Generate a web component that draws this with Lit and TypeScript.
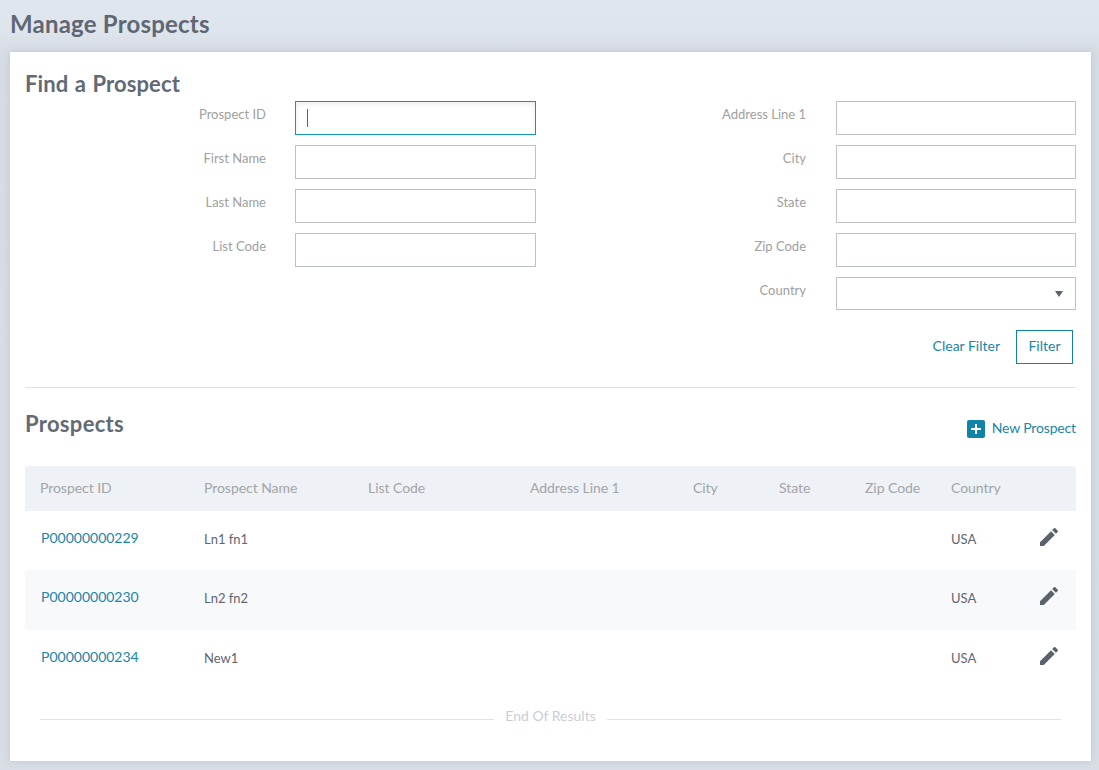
import { LitElement, css, html } from "lit";
import { customElement } from "lit/decorators.js";

const leftFields = ["First Name", "Last Name", "List Code"];
const rightFields = ["Address Line 1", "City", "State", "Zip Code"];
const columns = [
  "Prospect ID",
  "Prospect Name",
  "List Code",
  "Address Line 1",
  "City",
  "State",
  "Zip Code",
  "Country",
];
const prospects = [
  { id: "P00000000229", name: "Ln1 fn1", country: "USA" },
  { id: "P00000000230", name: "Ln2 fn2", country: "USA" },
  { id: "P00000000234", name: "New1", country: "USA" },
];

@customElement("app-root")
export class AppRoot extends LitElement {
  static styles = css`
    :host {
      display: block;
      height: 770px;
      overflow: hidden;
      box-sizing: border-box;
      padding: 0 8px 0 10px;
      background: linear-gradient(#e0e6ee 0, #dfe5ed 30px, #d8dde5 52px, #d9dee6 100%);
      font-family: Lato, "Open Sans", sans-serif;
      font-size: 14px;
      color: #5b626c;
    }

    * {
      box-sizing: border-box;
    }

    .page-title {
      margin: 0;
      height: 52px;
      padding-top: 9px;
      font-size: 24px;
      line-height: 30px;
      font-weight: 700;
      letter-spacing: 0.2px;
      color: #5f6773;
    }

    .card {
      height: 709px;
      padding: 15px 15px 0;
      background: #fff;
      box-shadow: 0 0 8px rgba(120, 130, 145, 0.25);
    }

    h2 {
      margin: 0;
      font-size: 22px;
      line-height: 34px;
      font-weight: 700;
      letter-spacing: 0.1px;
      word-spacing: 1px;
      color: #626a75;
    }

    .find-title {
      height: 34px;
    }

    .list-title {
      letter-spacing: 0.3px;
    }

    .form {
      display: grid;
      grid-template-columns: 511px 1fr;
      align-items: start;
    }

    .field-col {
      display: flex;
      flex-direction: column;
      gap: 10px;
    }

    .field {
      display: grid;
      grid-template-columns: 1fr 29px 241px;
      height: 34px;
    }

    .right .field {
      grid-template-columns: 1fr 30px 240px;
    }

    .field label {
      grid-column: 1;
      text-align: right;
      font-size: 13px;
      line-height: 26px;
      color: #a0a0a0;
    }

    .input,
    input {
      grid-column: 3;
      width: 100%;
      height: 34px;
      border: 1px solid #bfc2c4;
      background: #fff;
      margin: 0;
      padding: 0 11px;
      outline: none;
      border-radius: 0;
    }

    .input.focus {
      display: flex;
      align-items: center;
      border-color: #0f97b9;
      box-shadow: inset 0 2px 5px rgba(0, 0, 0, 0.08);
    }

    .caret {
      width: 1px;
      height: 18px;
      background: #5b626c;
    }

    .field.select {
      height: 33px;
    }

    .input.dropdown {
      height: 33px;
      display: flex;
      align-items: center;
      justify-content: flex-end;
      padding-right: 12px;
    }

    .arrow {
      width: 0;
      height: 0;
      border-left: 4px solid transparent;
      border-right: 4px solid transparent;
      border-top: 6px solid #5b626c;
    }

    .actions {
      display: flex;
      justify-content: flex-end;
      align-items: center;
      gap: 16px;
      margin-top: 20px;
      padding-right: 3px;
    }

    .actions .link {
      margin-top: -4px;
    }

    .link {
      color: #1a85a8;
      text-decoration: none;
    }

    .btn {
      width: 57px;
      height: 34px;
      border: 1px solid #0f83a9;
      background: #fff;
      color: #1a85a8;
      font: inherit;
      padding: 0 0 4px;
    }

    hr {
      margin: 23px 0 0;
      border: 0;
      border-top: 1px solid #e0e0e0;
    }

    .list-head {
      display: flex;
      justify-content: space-between;
      height: 78px;
      padding-top: 19px;
    }

    .new {
      display: flex;
      align-items: center;
      gap: 7px;
      height: 18px;
      margin-top: 13px;
      letter-spacing: -0.15px;
    }

    .new span {
      margin-top: -3px;
    }

    .plus {
      display: block;
      width: 18px;
      height: 18px;
    }

    .row {
      display: grid;
      grid-template-columns: 164px 164px 162px 163px 86px 86px 86px 1fr 36px;
      padding: 0 10px 4px 15px;
      align-items: center;
      height: 59px;
      font-size: 13px;
      color: #5f6670;
    }

    .row:nth-child(odd):not(.head) {
      height: 60px;
      padding-bottom: 5px;
      background: #f8f9fb;
    }

    .row.head {
      height: 45px;
      padding-bottom: 2px;
      background: #eef1f5;
      border-radius: 3px 3px 0 0;
      font-size: 14px;
      letter-spacing: -0.05px;
      color: #a3a5a7;
    }

    .row .link {
      margin: -2px 0 0 1px;
      font-size: 14px;
    }

    .edit {
      display: block;
      width: 24px;
      height: 24px;
      margin: -3px 0 0 7px;
      fill: #5b626c;
    }

    .end {
      display: flex;
      align-items: center;
      gap: 11px;
      margin: 17px 15px 0;
      color: #c9ced6;
      line-height: 20px;
    }

    .end::before,
    .end::after {
      content: "";
      flex: 1;
      height: 1px;
      margin-top: 6px;
      background: #e3e3e3;
    }
  `;

  render() {
    return html`
      <h1 class="page-title">Manage Prospects</h1>
      <main class="card">
        <h2 class="find-title">Find a Prospect</h2>
        <div class="form">
          <div class="field-col">
            <div class="field">
              <label>Prospect ID</label>
              <div class="input focus"><span class="caret"></span></div>
            </div>
            ${leftFields.map(
              (f) => html`<div class="field"><label>${f}</label><input type="text" /></div>`,
            )}
          </div>
          <div class="field-col right">
            ${rightFields.map(
              (f) => html`<div class="field"><label>${f}</label><input type="text" /></div>`,
            )}
            <div class="field select">
              <label>Country</label>
              <div class="input dropdown"><span class="arrow"></span></div>
            </div>
          </div>
        </div>
        <div class="actions">
          <a class="link">Clear Filter</a>
          <button class="btn">Filter</button>
        </div>
        <hr />
        <div class="list-head">
          <h2 class="list-title">Prospects</h2>
          <a class="link new">
            <svg class="plus" viewBox="0 0 18 18">
              <rect width="18" height="18" rx="2" fill="#0f83a9"></rect>
              <path d="M8 4h2v4h4v2h-4v4H8v-4H4V8h4z" fill="#fff"></path>
            </svg>
            <span>New Prospect</span>
          </a>
        </div>
        <div class="table">
          <div class="row head">
            ${columns.map((c) => html`<span>${c}</span>`)}
          </div>
          ${prospects.map(
            (p) => html`
              <div class="row">
                <a class="link">${p.id}</a>
                <span>${p.name}</span>
                <span></span><span></span><span></span><span></span><span></span>
                <span>${p.country}</span>
                <svg class="edit" viewBox="0 0 24 24">
                  <path d="M3 17.25V21h3.75L17.81 9.94l-3.75-3.75L3 17.25zM20.71 7.04a1 1 0 0 0 0-1.41l-2.34-2.34a1 1 0 0 0-1.41 0l-1.83 1.83 3.75 3.75 1.83-1.83z"></path>
                </svg>
              </div>
            `,
          )}
        </div>
        <div class="end">End Of Results</div>
      </main>
    `;
  }
}
